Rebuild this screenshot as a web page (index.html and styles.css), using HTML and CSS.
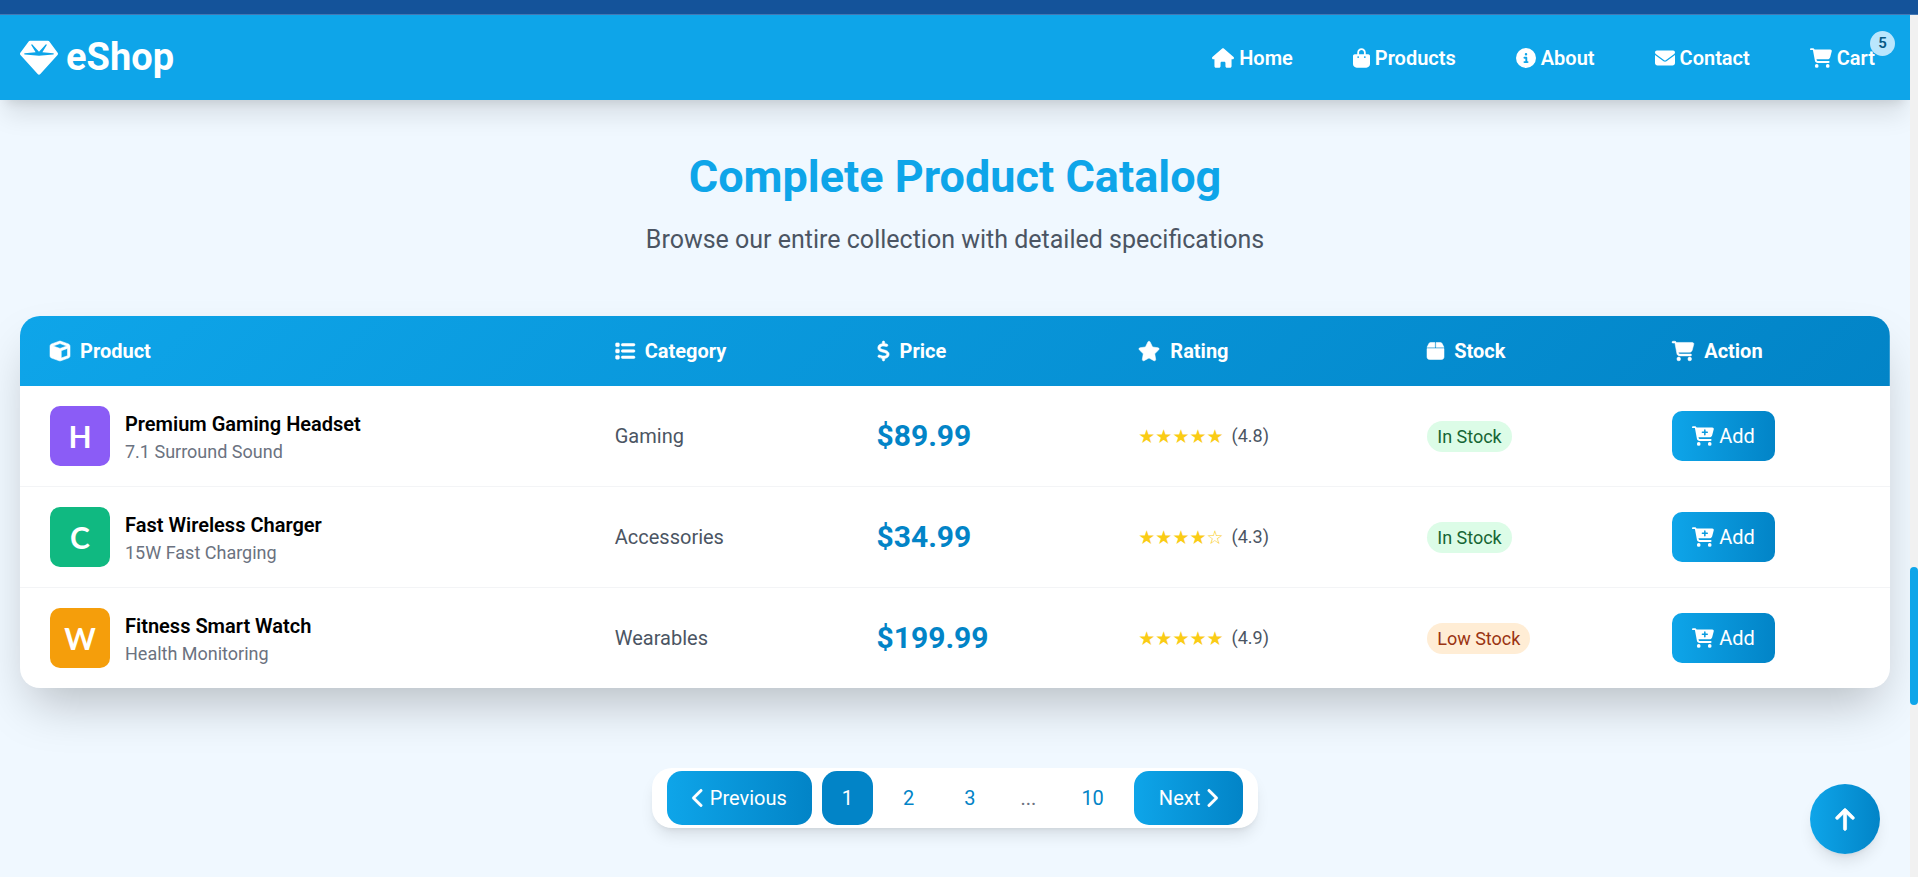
FILE: index.html
```html
<!DOCTYPE html>
<html lang="en">
<head>
<meta charset="utf-8">
<meta name="viewport" content="width=device-width, initial-scale=1">
<title>eShop - Complete Product Catalog</title>
<link rel="stylesheet" href="styles.css">
</head>
<body>
<svg class="sprite" aria-hidden="true">
  <symbol id="gem" viewBox="0 0 512 512"><path d="M116.7 33.8c4.5-6.1 11.7-9.8 19.3-9.8H376c7.6 0 14.8 3.6 19.3 9.8l112 152c6.8 9.2 6.1 21.9-1.5 30.4l-232 256c-4.5 5-11 7.9-17.8 7.9s-13.2-2.9-17.8-7.9l-232-256c-7.7-8.5-8.3-21.2-1.5-30.4l112-152zm38.5 39.8c-3.3 2.5-4.2 7-2.1 10.5l57.4 95.6L63.3 192c-4.1 .3-7.3 3.8-7.3 8s3.2 7.6 7.3 8l192 16c.4 0 .9 0 1.3 0l192-16c4.1-.3 7.3-3.8 7.3-8s-3.2-7.6-7.3-8L301.5 179.8l57.4-95.6c2.1-3.5 1.2-8.1-2.1-10.5s-7.9-2-10.7 1L256 172.2 165.9 74.6c-2.8-3-7.4-3.4-10.7-1z"/></symbol>
  <symbol id="house" viewBox="0 0 576 512"><path d="M575.8 255.5c0 18-15 32.1-32 32.1h-32l.7 160.2c0 2.7-.2 5.4-.5 8.1V472c0 22.1-17.9 40-40 40H456c-1.1 0-2.2 0-3.3-.1c-1.4 .1-2.8 .1-4.2 .1H416 392c-22.1 0-40-17.9-40-40V448 384c0-17.7-14.3-32-32-32H256c-17.7 0-32 14.3-32 32v64 24c0 22.1-17.9 40-40 40H160 128.1c-1.5 0-3-.1-4.5-.2c-1.2 .1-2.4 .2-3.6 .2H104c-22.1 0-40-17.9-40-40V360c0-.9 0-1.9 .1-2.8V287.6H32c-18 0-32-14-32-32.1c0-9 3-17 10-24L266.4 8c7-7 15-8 22-8s15 2 21 7L564.8 231.5c8 7 12 15 11 24z"/></symbol>
  <symbol id="bag" viewBox="0 0 448 512"><path d="M160 112c0-35.3 28.7-64 64-64s64 28.7 64 64v48H160V112zm-48 48H48c-26.5 0-48 21.5-48 48V416c0 53 43 96 96 96H352c53 0 96-43 96-96V208c0-26.5-21.5-48-48-48H336V112C336 50.1 285.9 0 224 0S112 50.1 112 112v48zm24 48a24 24 0 1 1 0 48 24 24 0 1 1 0-48zm152 24a24 24 0 1 1 48 0 24 24 0 1 1 -48 0z"/></symbol>
  <symbol id="info" viewBox="0 0 512 512"><path d="M256 512A256 256 0 1 0 256 0a256 256 0 1 0 0 512zM216 336h24V272H216c-13.3 0-24-10.7-24-24s10.7-24 24-24h48c13.3 0 24 10.7 24 24v88h8c13.3 0 24 10.7 24 24s-10.7 24-24 24H216c-13.3 0-24-10.7-24-24s10.7-24 24-24zm40-208a32 32 0 1 1 0 64 32 32 0 1 1 0-64z"/></symbol>
  <symbol id="envelope" viewBox="0 0 512 512"><path d="M48 64C21.5 64 0 85.5 0 112c0 15.1 7.1 29.3 19.2 38.4L236.8 313.6c11.4 8.5 27 8.5 38.4 0L492.8 150.4c12.1-9.1 19.2-23.3 19.2-38.4c0-26.5-21.5-48-48-48H48zM0 176V384c0 35.3 28.7 64 64 64H448c35.3 0 64-28.7 64-64V176L294.4 339.2c-22.8 17.1-54 17.1-76.8 0L0 176z"/></symbol>
  <symbol id="cart" viewBox="0 0 576 512"><path d="M0 24C0 10.7 10.7 0 24 0H69.5c22 0 41.5 12.8 50.6 32h411c26.3 0 45.5 25 38.6 50.4l-41 152.3c-8.5 31.4-37 53.3-69.5 53.3H170.7l5.4 28.5c2.2 11.3 12.1 19.5 23.6 19.5H488c13.3 0 24 10.7 24 24s-10.7 24-24 24H199.7c-34.6 0-64.3-24.6-70.7-58.5L77.4 54.5c-.7-3.8-4-6.5-7.9-6.5H24C10.7 48 0 37.3 0 24zM128 464a48 48 0 1 1 96 0 48 48 0 1 1 -96 0zm336-48a48 48 0 1 1 0 96 48 48 0 1 1 0-96z"/></symbol>
  <symbol id="cart-plus" viewBox="0 0 576 512"><path fill-rule="evenodd" d="M0 24C0 10.7 10.7 0 24 0H69.5c22 0 41.5 12.8 50.6 32h411c26.3 0 45.5 25 38.6 50.4l-41 152.3c-8.5 31.4-37 53.3-69.5 53.3H170.7l5.4 28.5c2.2 11.3 12.1 19.5 23.6 19.5H488c13.3 0 24 10.7 24 24s-10.7 24-24 24H199.7c-34.6 0-64.3-24.6-70.7-58.5L77.4 54.5c-.7-3.8-4-6.5-7.9-6.5H24C10.7 48 0 37.3 0 24zM128 464a48 48 0 1 1 96 0 48 48 0 1 1 -96 0zm336-48a48 48 0 1 1 0 96 48 48 0 1 1 0-96zM252 160c0 11 9 20 20 20h44v44c0 11 9 20 20 20s20-9 20-20V180h44c11 0 20-9 20-20s-9-20-20-20H356V96c0-11-9-20-20-20s-20 9-20 20v44H272c-11 0-20 9-20 20z"/></symbol>
  <symbol id="cube" viewBox="0 0 512 512"><path d="M234.5 5.7c13.9-5 29.1-5 43.1 0l192 68.6C495 83.4 512 107.5 512 134.6V377.4c0 27-17 51.2-42.5 60.3l-192 68.6c-13.9 5-29.1 5-43.1 0l-192-68.6C17 428.6 0 404.5 0 377.4V134.6c0-27 17-51.2 42.5-60.3l192-68.6zM256 66L82.3 128 256 190l173.7-62L256 66zm32 368.6l160-57.1v-188L288 246.6v188z"/></symbol>
  <symbol id="list" viewBox="0 0 512 512"><path d="M40 48C26.7 48 16 58.7 16 72v48c0 13.3 10.7 24 24 24H88c13.3 0 24-10.7 24-24V72c0-13.3-10.7-24-24-24H40zM192 64c-17.7 0-32 14.3-32 32s14.3 32 32 32H480c17.7 0 32-14.3 32-32s-14.3-32-32-32H192zm0 160c-17.7 0-32 14.3-32 32s14.3 32 32 32H480c17.7 0 32-14.3 32-32s-14.3-32-32-32H192zm0 160c-17.7 0-32 14.3-32 32s14.3 32 32 32H480c17.7 0 32-14.3 32-32s-14.3-32-32-32H192zM16 232v48c0 13.3 10.7 24 24 24H88c13.3 0 24-10.7 24-24V232c0-13.3-10.7-24-24-24H40c-13.3 0-24 10.7-24 24zM40 368c-13.3 0-24 10.7-24 24v48c0 13.3 10.7 24 24 24H88c13.3 0 24-10.7 24-24V392c0-13.3-10.7-24-24-24H40z"/></symbol>
  <symbol id="dollar" viewBox="0 0 320 512"><path d="M160 0c17.7 0 32 14.3 32 32V67.7c1.6 .2 3.1 .4 4.7 .7c.4 .1 .7 .1 1.1 .2l48 8.8c17.4 3.2 28.9 19.9 25.7 37.2s-19.9 28.9-37.2 25.7l-47.5-8.7c-31.3-4.6-58.9-1.5-78.3 6.2s-27.2 18.3-29 28.1c-2 10.7-.5 16.7 1.2 20.4c1.8 3.9 5.5 8.3 12.8 13.2c16.3 10.7 41.3 17.7 73.7 26.3l2.9 .8c28.6 7.6 63.6 16.8 89.6 33.8c14.2 9.3 27.6 21.9 35.9 39.5c8.5 17.9 10.3 37.9 6.4 59.2c-6.9 38-33.1 63.4-65.6 76.7c-13.7 5.6-28.6 9.2-44.4 11V480c0 17.7-14.3 32-32 32s-32-14.3-32-32V445.1c-.4-.1-.9-.1-1.3-.2l-.2 0 0 0c-24.4-3.8-64.5-14.3-91.5-26.3c-16.1-7.2-23.4-26.1-16.2-42.2s26.1-23.4 42.2-16.2c20.9 9.3 55.3 18.5 75.2 21.6c31.9 4.7 58.2 2 76-5.3c16.9-6.9 24.6-16.9 26.8-28.9c1.9-10.6 .4-16.7-1.3-20.4c-1.9-4-5.6-8.4-13-13.3c-16.4-10.7-41.5-17.7-74-26.3l-2.8-.7 0 0C119.4 279.3 84.4 270 58.4 253c-14.2-9.3-27.5-22-35.8-39.6c-8.4-17.9-10.1-37.9-6.1-59.2C23.7 116 52.3 91.2 84.8 78.3c13.3-5.3 27.9-8.9 43.2-11V32c0-17.7 14.3-32 32-32z"/></symbol>
  <symbol id="star" viewBox="0 0 576 512"><path d="M316.9 18C311.6 7 300.4 0 288.1 0s-23.4 7-28.8 18L195 150.3 51.4 171.5c-12 1.8-22 10.2-25.7 21.7s-.7 24.2 7.9 32.7L137.8 329 113.2 474.7c-2 12 3 24.2 12.9 31.3s23 8 33.8 2.3l128.3-68.5 128.3 68.5c10.8 5.7 23.9 4.9 33.8-2.3s14.9-19.3 12.9-31.3L438.5 329 542.7 225.9c8.6-8.5 11.7-21.2 7.9-32.7s-13.7-19.9-25.7-21.7L381.2 150.3 316.9 18z"/></symbol>
  <symbol id="box" viewBox="0 0 448 512"><path d="M50.7 58.5L0 160H208V32H93.7C75.5 32 58.9 42.3 50.7 58.5zM240 160H448L397.3 58.5C389.1 42.3 372.5 32 354.3 32H240V160zm208 32H0V416c0 35.3 28.7 64 64 64H384c35.3 0 64-28.7 64-64V192z"/></symbol>
  <symbol id="chevron-left" viewBox="0 0 320 512"><path d="M9.4 233.4c-12.5 12.5-12.5 32.8 0 45.3l192 192c12.5 12.5 32.8 12.5 45.3 0s12.5-32.8 0-45.3L77.3 256 246.6 86.6c12.5-12.5 12.5-32.8 0-45.3s-32.8-12.5-45.3 0l-192 192z"/></symbol>
  <symbol id="chevron-right" viewBox="0 0 320 512"><path d="M310.6 233.4c12.5 12.5 12.5 32.8 0 45.3l-192 192c-12.5 12.5-32.8 12.5-45.3 0s-12.5-32.8 0-45.3L242.7 256 73.4 86.6c-12.5-12.5-12.5-32.8 0-45.3s32.8-12.5 45.3 0l192 192z"/></symbol>
  <symbol id="arrow-up" viewBox="0 0 384 512"><path d="M214.6 41.4c-12.5-12.5-32.8-12.5-45.3 0l-160 160c-12.5 12.5-12.5 32.8 0 45.3s32.8 12.5 45.3 0L160 141.2V448c0 17.7 14.3 32 32 32s32-14.3 32-32V141.2L329.4 246.6c12.5 12.5 32.8 12.5 45.3 0s12.5-32.8 0-45.3l-160-160z"/></symbol>
</svg>

<div class="top-strip"></div>
<div class="viewport">
  <div class="page">
    <header class="site-header">
      <a class="logo" href="#"><svg class="logo-icon"><use href="#gem"/></svg>eShop</a>
      <nav class="nav">
        <a class="nav-link" href="#"><svg class="icon icon-wide"><use href="#house"/></svg>Home</a>
        <a class="nav-link" href="#"><svg class="icon icon-box"><use href="#bag"/></svg>Products</a>
        <a class="nav-link" href="#"><svg class="icon"><use href="#info"/></svg>About</a>
        <a class="nav-link" href="#"><svg class="icon"><use href="#envelope"/></svg>Contact</a>
        <a class="nav-link" href="#"><svg class="icon icon-wide"><use href="#cart"/></svg>Cart<span class="cart-count">5</span></a>
      </nav>
    </header>

    <main class="catalog">
      <div class="catalog-heading">
        <h1 class="title">Complete Product Catalog</h1>
        <p class="subtitle">Browse our entire collection with detailed specifications</p>
      </div>

      <div class="table-card">
        <table class="products">
          <colgroup>
            <col class="col-product"><col class="col-category"><col class="col-price"><col class="col-rating"><col class="col-stock"><col class="col-action">
          </colgroup>
          <thead>
            <tr>
              <th scope="col"><span class="th-label"><svg class="icon"><use href="#cube"/></svg>Product</span></th>
              <th scope="col"><span class="th-label"><svg class="icon"><use href="#list"/></svg>Category</span></th>
              <th scope="col"><span class="th-label"><svg class="icon icon-narrow"><use href="#dollar"/></svg>Price</span></th>
              <th scope="col"><span class="th-label"><svg class="icon icon-wide"><use href="#star"/></svg>Rating</span></th>
              <th scope="col"><span class="th-label"><svg class="icon icon-box"><use href="#box"/></svg>Stock</span></th>
              <th scope="col"><span class="th-label"><svg class="icon icon-wide"><use href="#cart"/></svg>Action</span></th>
            </tr>
          </thead>
          <tbody>
            <tr>
              <td><div class="product"><span class="thumb thumb-violet">H</span><div><div class="product-name">Premium Gaming Headset</div><div class="product-desc">7.1 Surround Sound</div></div></div></td>
              <td class="category">Gaming</td>
              <td class="price">$89.99</td>
              <td><div class="rating"><span class="stars">★★★★★</span><span class="score">(4.8)</span></div></td>
              <td><span class="stock stock-in">In Stock</span></td>
              <td><button class="add" type="button"><svg class="icon icon-wide"><use href="#cart-plus"/></svg>Add</button></td>
            </tr>
            <tr>
              <td><div class="product"><span class="thumb thumb-green">C</span><div><div class="product-name">Fast Wireless Charger</div><div class="product-desc">15W Fast Charging</div></div></div></td>
              <td class="category">Accessories</td>
              <td class="price">$34.99</td>
              <td><div class="rating"><span class="stars">★★★★☆</span><span class="score">(4.3)</span></div></td>
              <td><span class="stock stock-in">In Stock</span></td>
              <td><button class="add" type="button"><svg class="icon icon-wide"><use href="#cart-plus"/></svg>Add</button></td>
            </tr>
            <tr>
              <td><div class="product"><span class="thumb thumb-amber">W</span><div><div class="product-name">Fitness Smart Watch</div><div class="product-desc">Health Monitoring</div></div></div></td>
              <td class="category">Wearables</td>
              <td class="price">$199.99</td>
              <td><div class="rating"><span class="stars">★★★★★</span><span class="score">(4.9)</span></div></td>
              <td><span class="stock stock-low">Low Stock</span></td>
              <td><button class="add" type="button"><svg class="icon icon-wide"><use href="#cart-plus"/></svg>Add</button></td>
            </tr>
          </tbody>
        </table>
      </div>

      <nav class="pagination" aria-label="Pagination">
        <a class="page-step" href="#"><svg class="icon icon-narrow"><use href="#chevron-left"/></svg>Previous</a>
        <a class="page-link page-current" href="#" aria-current="page">1</a>
        <a class="page-link" href="#">2</a>
        <a class="page-link" href="#">3</a>
        <span class="page-dots">...</span>
        <a class="page-link" href="#">10</a>
        <a class="page-step" href="#">Next<svg class="icon icon-narrow"><use href="#chevron-right"/></svg></a>
      </nav>
    </main>
  </div>
  <div class="scroll-track" aria-hidden="true"><div class="scroll-thumb"></div></div>
</div>
<button class="to-top" type="button" aria-label="Back to top"><svg class="to-top-icon"><use href="#arrow-up"/></svg></button>
</body>
</html>
```
FILE: styles.css
```css
* {
  box-sizing: border-box;
}

body {
  margin: 0;
  min-height: 100vh;
  display: flex;
  flex-direction: column;
  background: #f0f8ff;
  color: #000;
  font-family: Roboto, "Liberation Sans", sans-serif;
  font-size: 20px;
  line-height: 30px;
}

a {
  color: inherit;
  text-decoration: none;
}

.sprite {
  position: absolute;
  width: 0;
  height: 0;
}

.icon {
  width: 20px;
  height: 20px;
  flex: none;
  overflow: visible;
  fill: currentColor;
}

.icon-wide { width: 22px; }
.icon-box { width: 17px; }
.icon-narrow { width: 13px; }

symbol {
  overflow: visible;
}

.top-strip {
  height: 15px;
  background: #14539a;
  border-bottom: 1px solid #4378b4;
}

.viewport {
  flex: 1;
  display: flex;
}

.page {
  flex: 1;
  min-width: 0;
  overflow: hidden;
}

.scroll-track {
  width: 8px;
  display: flex;
  flex-direction: column;
  background: #f1f1f1;
}

.scroll-thumb {
  height: 16%;
  margin-top: auto;
  margin-bottom: 172px;
  border-radius: 4px;
  background: #0ea5e9;
}

/* Header */
.site-header {
  display: flex;
  align-items: center;
  justify-content: space-between;
  padding: 20px;
  background: #0ea5e9;
  color: #fff;
  box-shadow: 0 20px 25px -5px rgba(0, 0, 0, 0.1), 0 8px 10px -6px rgba(0, 0, 0, 0.1);
}

.logo {
  display: flex;
  align-items: center;
  gap: 8px;
  font-size: 38px;
  font-weight: 700;
  line-height: 45px;
}

.logo-icon {
  width: 38px;
  height: 38px;
  fill: currentColor;
}

.nav {
  display: flex;
  gap: 30px;
}

.nav-link {
  position: relative;
  display: flex;
  align-items: center;
  gap: 5px;
  padding: 7px 15px;
  font-weight: 600;
}

.cart-count {
  position: absolute;
  top: -5px;
  right: -5px;
  width: 25px;
  height: 25px;
  border-radius: 50%;
  background: #bae6fd;
  color: #075985;
  font-size: 15px;
  line-height: 25px;
  text-align: center;
}

/* Catalog */
.catalog {
  padding: 52px 20px 0;
}

.catalog-heading {
  margin-bottom: 58px;
  text-align: center;
}

.title {
  margin: 0 0 20px;
  color: #0ea5e9;
  font-size: 45px;
  font-weight: 700;
  line-height: 50px;
}

.subtitle {
  margin: 0;
  color: #4b5563;
  font-size: 25px;
  line-height: 36px;
}

.table-card {
  overflow: hidden;
  border-radius: 20px;
  background: #fff;
  box-shadow: 0 25px 50px -12px rgba(0, 0, 0, 0.25);
}

.products {
  width: 100%;
  table-layout: fixed;
  border-collapse: collapse;
}

.col-product { width: 30.2%; }
.col-category { width: 14%; }
.col-price { width: 14%; }
.col-rating { width: 15.45%; }
.col-stock { width: 13.1%; }
.col-action { width: 13.25%; }

.products thead {
  background: linear-gradient(135deg, #0ea5e9, #0284c7);
  color: #fff;
}

.products th {
  padding: 20px 30px;
  font-weight: 700;
  text-align: left;
}

.th-label {
  display: flex;
  align-items: center;
  gap: 10px;
}

.th-label .icon {
  stroke: currentColor;
  stroke-width: 14px;
}

.products td {
  padding: 20px 30px;
  vertical-align: middle;
}

.products tbody tr + tr {
  border-top: 1px solid #f3f4f6;
}

.product {
  display: flex;
  align-items: center;
  gap: 15px;
}

.thumb {
  width: 60px;
  height: 60px;
  border-radius: 10px;
  color: #fff;
  font-family: Lato, sans-serif;
  font-size: 30px;
  font-weight: 700;
  line-height: 60px;
  text-align: center;
}

.thumb-violet { background: #8b5cf6; }
.thumb-green { background: #10b981; }
.thumb-amber { background: #f59e0b; }

.product-name {
  font-weight: 600;
}

.product-desc {
  color: #6b7280;
  font-size: 18px;
  line-height: 25px;
}

.category {
  color: #4b5563;
}

.price {
  color: #0284c7;
  font-size: 30px;
  font-weight: 700;
}

.rating {
  display: flex;
  align-items: center;
  gap: 8px;
}

.stars {
  color: #facc15;
  font-family: "DejaVu Sans", sans-serif;
  font-size: 19px;
}

.score {
  color: #4b5563;
  font-size: 18px;
}

.stock {
  display: inline-block;
  padding: 3px 10px;
  border-radius: 16px;
  font-size: 18px;
  line-height: 25px;
}

.stock-in {
  background: #dcfce7;
  color: #166534;
}

.stock-low {
  background: #ffedd5;
  color: #9a3412;
}

.add {
  display: inline-flex;
  align-items: center;
  gap: 5px;
  padding: 10px 20px;
  border: 0;
  border-radius: 10px;
  background: linear-gradient(90deg, #0ea5e9, #0284c7);
  color: #fff;
  font: inherit;
  cursor: pointer;
}

/* Pagination */
.pagination {
  display: flex;
  align-items: center;
  gap: 10px;
  width: fit-content;
  margin: 80px auto 0;
  padding: 3px 15px;
  border-radius: 20px;
  background: #fff;
  box-shadow: 0 10px 15px -3px rgba(0, 0, 0, 0.1), 0 4px 6px -4px rgba(0, 0, 0, 0.1);
}

.page-step {
  display: flex;
  align-items: center;
  gap: 5px;
  padding: 12px 25px;
  border-radius: 15px;
  background: linear-gradient(90deg, #0ea5e9, #0284c7);
  color: #fff;
}

.page-step .icon {
  stroke: currentColor;
  stroke-width: 14px;
}

.page-link {
  padding: 12px 20px;
  border-radius: 15px;
  color: #0284c7;
}

.page-current {
  background: #0284c7;
  color: #fff;
}

.page-dots {
  padding: 12px 15px;
  color: #6b7280;
}

.to-top {
  position: fixed;
  right: 38px;
  bottom: 23px;
  display: flex;
  align-items: center;
  justify-content: center;
  width: 70px;
  height: 70px;
  padding: 0;
  border: 0;
  border-radius: 50%;
  background: linear-gradient(90deg, #0ea5e9, #0284c7);
  color: #fff;
  box-shadow: 0 10px 15px -3px rgba(0, 0, 0, 0.1), 0 4px 6px -4px rgba(0, 0, 0, 0.1);
  cursor: pointer;
}

.to-top-icon {
  width: 20px;
  height: 25px;
  overflow: visible;
  fill: currentColor;
  stroke: currentColor;
  stroke-width: 14px;
}
```
